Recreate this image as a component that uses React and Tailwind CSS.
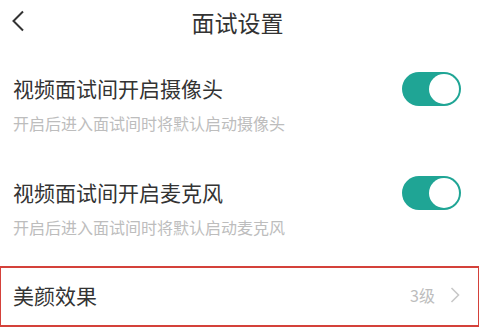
import React, { useState } from 'react';

const font = { fontFamily: '"Noto Sans CJK SC", "Noto Sans", sans-serif' };

const Toggle = ({ on, onChange }) => (
    <button
        type="button"
        onClick={() => onChange(!on)}
        className={`relative w-[59px] h-[34px] rounded-full ${on ? 'bg-[#1fa595]' : 'bg-[#dddddd]'}`}
    >
        <span
            className={`absolute top-[2px] w-[30px] h-[30px] rounded-full bg-white ${on ? 'right-[2px]' : 'left-[2px]'}`}
        />
    </button>
);

const SwitchRow = ({ title, desc, on, onChange, className }) => (
    <div className={`pl-[13px] pr-[18px] ${className}`}>
        <div className="flex items-center justify-between h-[34px]">
            <span className="text-[21px] leading-[28px] text-[#333333] -mt-[3px]">{title}</span>
            <Toggle on={on} onChange={onChange} />
        </div>
        <p className="mt-[6px] text-[16px] leading-[22px] text-[#bdbdbd]">{desc}</p>
    </div>
);

const App = () => {
    const [camera, setCamera] = useState(true);
    const [mic, setMic] = useState(true);

    return (
        <div className="w-[479px] h-[328px] bg-white overflow-hidden" style={font}>
            <div className="relative flex items-center justify-center h-[44px]">
                <svg className="absolute left-[11px] top-[10px]" width="14" height="22" viewBox="0 0 14 22">
                    <path d="M12 1.5 L2.5 11 L12 20.5" fill="none" stroke="#333333" strokeWidth="2" />
                </svg>
                <h1 className="text-[23px] leading-[30px] text-[#333333] -mt-[1px] -ml-[4px]">面试设置</h1>
            </div>

            <SwitchRow
                className="pt-[28px]"
                title="视频面试间开启摄像头"
                desc="开启后进入面试间时将默认启动摄像头"
                on={camera}
                onChange={setCamera}
            />
            <SwitchRow
                className="mt-[42px]"
                title="视频面试间开启麦克风"
                desc="开启后进入面试间时将默认启动麦克风"
                on={mic}
                onChange={setMic}
            />

            <div className="mt-[28px] h-[61px] border-y-2 border-x border-[#d4413a] flex items-center justify-between pl-[12px] pr-[18px] pb-[3px]">
                <span className="text-[21px] leading-[28px] text-[#333333]">美颜效果</span>
                <div className="flex items-center gap-[15px]">
                    <span className="text-[16px] leading-[22px] text-[#bdbdbd]">3级</span>
                    <svg width="10" height="16" viewBox="0 0 10 16">
                        <path d="M1.5 1 L8.5 8 L1.5 15" fill="none" stroke="#c8c8c8" strokeWidth="1.6" />
                    </svg>
                </div>
            </div>
        </div>
    );
};

export default App;
